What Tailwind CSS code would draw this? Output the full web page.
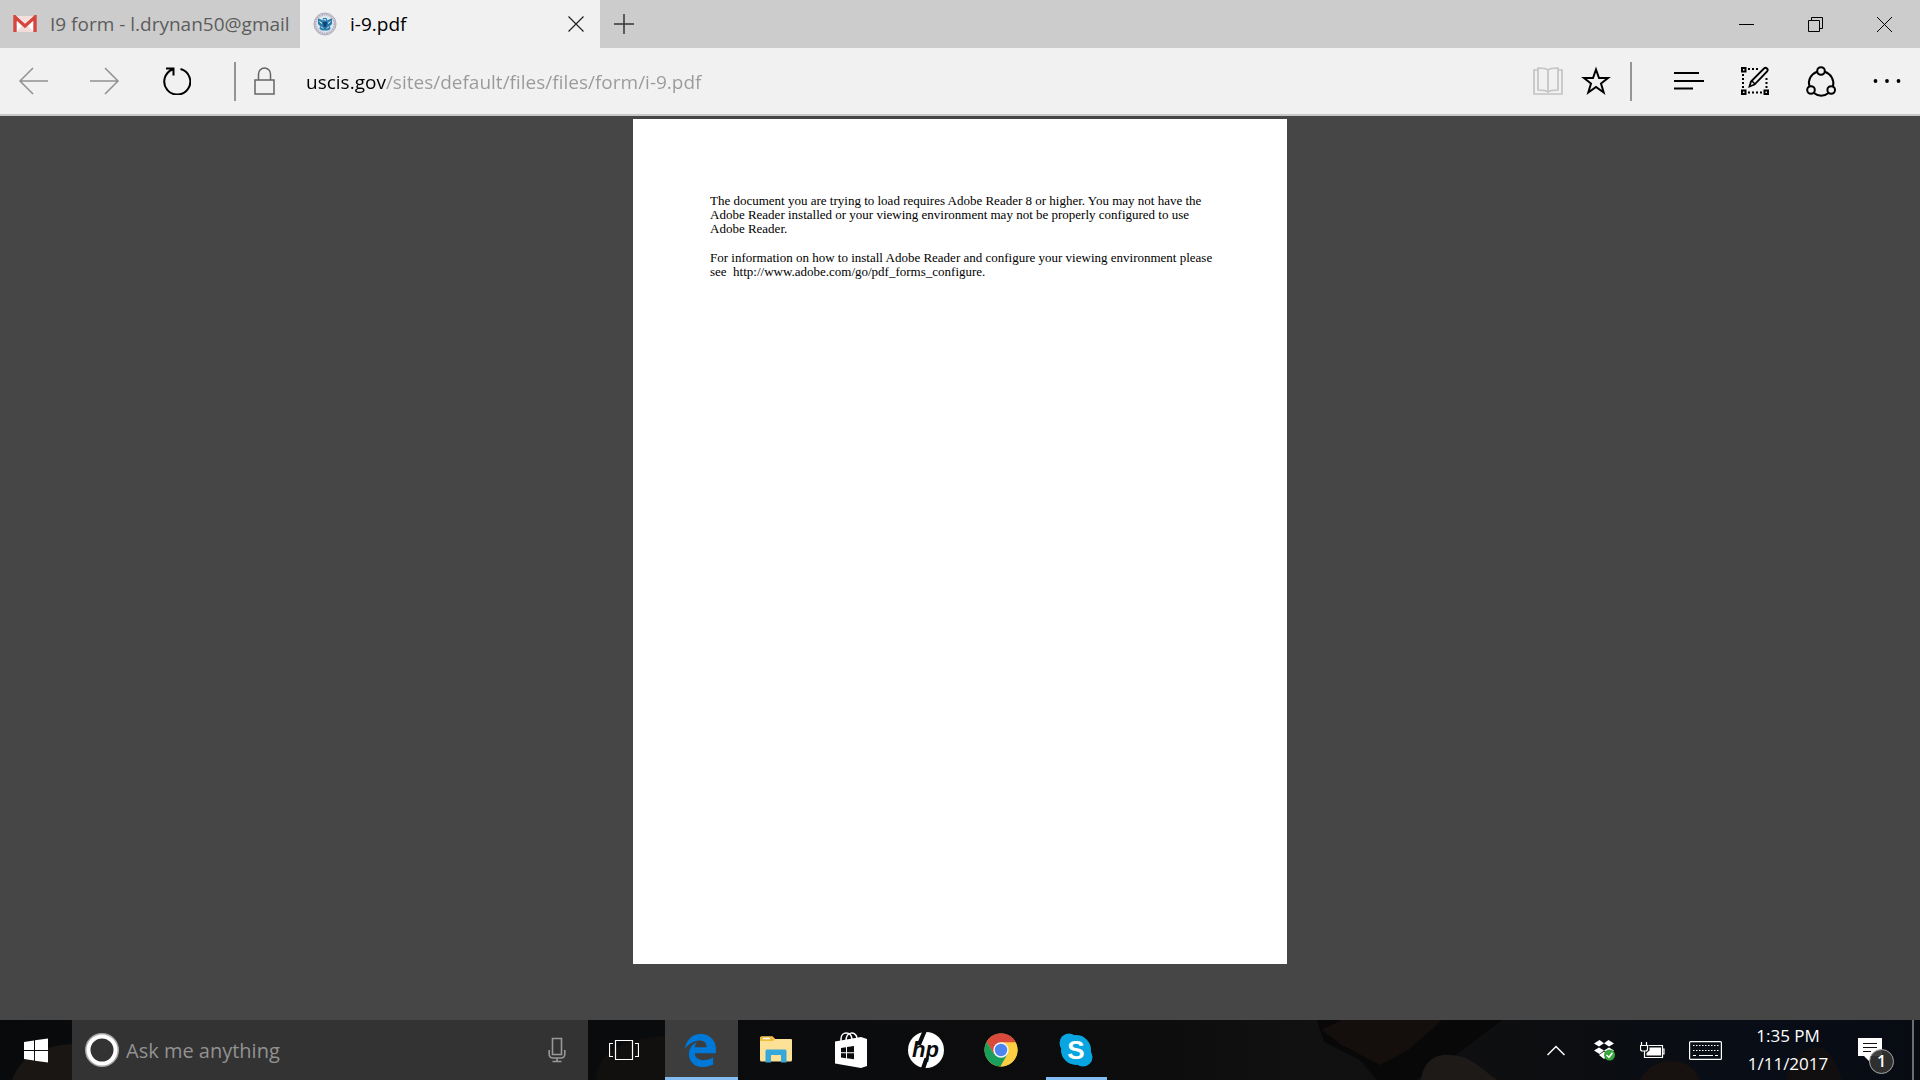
<!DOCTYPE html>
<html lang="en">
<head>
  <meta charset="UTF-8" />
  <meta name="viewport" content="width=device-width, initial-scale=1.0"/>
  <title>i-9.pdf</title>
  <script src="https://cdn.jsdelivr.net/npm/@tailwindcss/browser@4"></script>
</head>
<body class="min-h-screen flex flex-col bg-[#464646] font-['Open_Sans',sans-serif] text-black">

  <!-- Tab strip -->
  <header class="h-12 flex bg-[#cccccc]">
    <button class="w-75 h-12 pl-[13px] flex items-center gap-[13px] text-[19px] text-[#5c5c5c] whitespace-nowrap overflow-hidden">
      <svg class="shrink-0" width="24" height="18" viewBox="0 0 24 18">
        <rect x="1" y="1" width="22" height="16" fill="#fff"/>
        <path d="M3 17l7-7h4l7 7z" fill="#f3dcda"/>
        <path d="M2 17V2l10 9 10-9v15" fill="none" stroke="#d5463f" stroke-width="3.400"/>
        <path d="M4 1h16l-8 7z" fill="#f6dedc"/>
      </svg>
      <span>I9 form - l.drynan50@gmail</span>
    </button>
    <div class="w-75 h-12 pl-[13px] pr-4 flex items-center bg-[#f1f1f1] text-[19px]">
      <svg class="shrink-0 mr-[13px]" width="24" height="24" viewBox="0 0 24 24">
        <circle cx="12" cy="12" r="11" fill="#d9dbe2" stroke="#a7adba" stroke-width="1"/>
        <circle cx="12" cy="12" r="9.500" fill="none" stroke="#b5a5b8" stroke-width="1.500" stroke-dasharray="1.400 1"/>
        <circle cx="12" cy="12" r="7.800" fill="#dcebf3"/>
        <path d="M5 6.500c2 0 3 1 4.500 2L10 6h3.500l1 2.500C16 7.500 17 6.500 19 6.500V12l-2 2 .5 3-2.500 1.500H9L6.500 17 7 14l-2-2z" fill="#2a7dab"/>
        <path d="M10 10h4l-.5 4-1.500 1.500-1.500-1.500z" fill="#0d4474"/>
        <path d="M10.500 7.500l2.500 .5M6.500 9.500l2.500 2M17.500 9.500l-2.500 2M8 14.500l2 2M16 14.500l-2 2" stroke="#fff" fill="none"/>
      </svg>
      <button class="grow text-left">i-9.pdf</button>
      <button aria-label="Close tab">
        <svg width="16" height="16" viewBox="0 0 16 16" fill="none" stroke="#222" stroke-width="1.200"><path d="M.5 .5l15 15M15.500 .5l-15 15"/></svg>
      </button>
    </div>
    <button aria-label="New tab" class="w-12 flex items-center justify-center">
      <svg width="20" height="20" viewBox="0 0 20 20" fill="none" stroke="#333" stroke-width="1.500"><path d="M10 0v20M0 10h20"/></svg>
    </button>
    <div class="ml-auto mr-px flex">
      <button aria-label="Minimize" class="w-[69px] flex items-center justify-center">
        <svg width="15" height="15" viewBox="0 0 15 15" fill="none" stroke="#000"><path d="M0 7.500h15"/></svg>
      </button>
      <button aria-label="Restore" class="w-[69px] flex items-center justify-center">
        <svg width="15" height="15" viewBox="0 0 15 15" fill="none" stroke="#000"><path d="M.5 3.500h11v11H.5zM3.500 3.500v-3h11v11h-3"/></svg>
      </button>
      <button aria-label="Close" class="w-[69px] flex items-center justify-center">
        <svg width="15" height="15" viewBox="0 0 15 15" fill="none" stroke="#000"><path d="M0 0l15 15M15 0L0 15"/></svg>
      </button>
    </div>
  </header>

  <!-- Address bar -->
  <nav class="h-[68px] pl-px flex items-center bg-[#f1f1f1] border-b-2 border-[#c8c8c8]">
    <button aria-label="Back" class="w-16 flex justify-center">
      <svg width="30" height="28" viewBox="0 0 30 28" fill="none" stroke="#919191" stroke-width="1.500"><path d="M30 14H2M15 1L2 14l13 13"/></svg>
    </button>
    <button aria-label="Forward" class="w-20 flex justify-center">
      <svg width="30" height="28" viewBox="0 0 30 28" fill="none" stroke="#919191" stroke-width="1.500"><path d="M0 14h28M15 1l13 13-13 13"/></svg>
    </button>
    <button aria-label="Refresh" class="w-16 flex justify-center">
      <svg width="28" height="28" viewBox="0 0 28 28" fill="none" stroke="#000" stroke-width="2"><path d="M17.500 2A13 13 0 1 1 9.500 2.500M3 1.500h7.500V8.500"/></svg>
    </button>
    <div class="w-0.5 h-[39px] ml-[25px] bg-[#959595]"></div>
    <svg class="ml-[18px] shrink-0" width="21" height="28" viewBox="0 0 21 28" fill="none" stroke="#666" stroke-width="1.500"><path d="M1 13h19v14H1zM4.500 13V7a6 6 0 0 1 12 0v6"/></svg>
    <input aria-label="Address" value="uscis.gov/sites/default/files/files/form/i-9.pdf" class="grow ml-[31px] h-10 pt-0.5 text-[19px] outline-none text-transparent bg-clip-text bg-[linear-gradient(90deg,#000_80px,#999_80px)]" />
    <button aria-label="Reading view" class="w-12 flex justify-center">
      <svg width="30" height="28" viewBox="0 0 30 28" fill="none" stroke="#c4c4c4" stroke-width="1.700"><path d="M5 3H1v24h28V3h-4M15 3c-2-2-6-2-10-2v22c4 0 8 0 10 2 2-2 6-2 10-2V1c-4 0-8 0-10 2zM15 3v22"/></svg>
    </button>
    <button aria-label="Add to favorites" class="w-12 flex justify-center">
      <svg width="30" height="30" viewBox="0 0 30 30" fill="none" stroke="#000" stroke-width="2"><path d="M15 3.500l3 8.500h9l-7 5.500 2.700 9L15 21l-7.700 5.500 2.700-9L3 12h9z"/></svg>
    </button>
    <div class="w-0.5 h-[39px] ml-2.5 mr-6 bg-[#959595]"></div>
    <button aria-label="Hub" class="w-[66px] flex justify-center">
      <svg width="30" height="20" viewBox="0 0 30 20" fill="none" stroke="#000" stroke-width="2"><path d="M0 2h25M0 10h30M0 17.500h19"/></svg>
    </button>
    <button aria-label="Make a Web Note" class="w-[66px] flex justify-center">
      <svg width="30" height="30" viewBox="0 0 30 30" fill="none" stroke="#000" stroke-width="2">
        <path d="M2 2h3.500v3.500H2zM2 24.500h3.500V28H2zM24.500 24.500H28V28h-3.500z"/>
        <path d="M8 3h11M8 26.500h15M3 8v15M26.500 12v11" stroke-dasharray="2 2"/>
        <path d="M9.500 20.500l1.500-5L24 2.500a2 2 0 0 1 3 3L14.500 18.500z" stroke-width="1.800"/>
        <path d="M12 15l3 3" stroke-width="1.500"/>
      </svg>
    </button>
    <button aria-label="Share" class="w-[66px] flex justify-center">
      <svg width="30" height="31" viewBox="0 0 30 31" fill="none" stroke="#000" stroke-width="2">
        <circle cx="15" cy="5" r="3.800"/><circle cx="5" cy="24" r="3.800"/><circle cx="25.200" cy="24" r="3.800"/>
        <path d="M11.200 5.800C5 8 1.500 14 3.500 20.200M18.800 5.800C25 8 28.500 14 27 20.200M8 27c4 3.500 10.500 3.500 14.500 0"/>
      </svg>
    </button>
    <button aria-label="More actions" class="w-[66px] flex justify-center">
      <svg width="28" height="4" viewBox="0 0 28 4"><circle cx="2.500" cy="2" r="1.900"/><circle cx="14" cy="2" r="1.900"/><circle cx="25.500" cy="2" r="1.900"/></svg>
    </button>
  </nav>

  <!-- Document -->
  <main class="grow pt-[3px] pb-14">
    <article class="w-[654px] aspect-[654/845] mx-auto pt-[75px] pl-[77px] pr-14 bg-white font-['Liberation_Serif',serif] text-[13px] leading-[14px] whitespace-nowrap">
      <p>The document you are trying to load requires Adobe Reader 8 or higher. You may not have the<br>
        Adobe Reader installed or your viewing environment may not be properly configured to use<br>
        Adobe Reader.</p>
      <p class="mt-[15px]">For information on how to install Adobe Reader and configure your viewing environment please<br>
        see &nbsp;http://www.adobe.com/go/pdf_forms_configure.</p>
    </article>
  </main>

  <!-- Taskbar -->
  <footer class="relative h-15 flex bg-[#0b0c0e] text-white">
    <!-- dimmed wallpaper behind the bar -->
    <svg class="absolute inset-0 w-full h-full" viewBox="0 0 1920 60" preserveAspectRatio="none">
      <defs>
        <linearGradient id="wall">
          <stop offset="0" stop-color="#090a0b"/><stop offset=".35" stop-color="#0a0b0d"/><stop offset=".6" stop-color="#0d0d0e"/>
          <stop offset=".68" stop-color="#121112"/><stop offset=".8" stop-color="#0d0e10"/><stop offset=".92" stop-color="#080d17"/><stop offset="1" stop-color="#080b12"/>
        </linearGradient>
      </defs>
      <path fill="url(#wall)" d="M0 0h1920v60H0z"/>
      <path fill="#191613" d="M12 60c8-22 26-34 60-36v36z"/>
      <path fill="#12100e" d="M596 60c2-26 20-40 69-44v44z"/>
      <path fill="#090808" d="M1317 0h185l-42 32-45 28h-38l-17-20-36-18z"/>
      <path fill="#140f0d" d="M1322 10l20-10h100l-34 30-28 15-38-20z"/>
      <path fill="#1d1a18" d="M1421 60c2-18 14-26 26-25 22-1 32 12 50 25z"/>
      <path fill="#17110f" d="M1640 60c6-12 18-19 30-19 16 0 24 6 30 19z"/>
      <path fill="#120f10" d="M1786 60c4-18 12-31 32-33 12 2 20 20 24 33z"/>
    </svg>

    <div class="relative grow flex">
      <button aria-label="Start" class="w-18 flex items-center justify-center">
        <svg width="24" height="25" viewBox="0 0 24 25" fill="#fff"><path d="M0 4l10-1.500V12H0zM11 2.300L24 .5V12H11zM0 13h10v9.500L0 21zM11 13h13v11.500l-13-1.800z"/></svg>
      </button>
      <label class="w-129 pl-3 pr-[22px] flex items-center bg-[#333333]">
        <svg class="shrink-0" width="36" height="36" viewBox="0 0 36 36" fill="none"><circle cx="18" cy="18" r="16" stroke="#aaa" stroke-width="2"/><circle cx="18" cy="18" r="13.500" stroke="#fff" stroke-width="4"/></svg>
        <input aria-label="Search" placeholder="Ask me anything" class="grow ml-1.5 pt-0.5 text-[20px] outline-none placeholder:text-[#929292]" />
        <svg width="18" height="26" viewBox="0 0 18 26" fill="none" stroke="#999" stroke-width="1.600"><path d="M4.500 1.500h9v16h-9zM1.200 13v4c0 3 1.500 4 4 4h7.600c2.500 0 4-1 4-4v-4M9 21v3.500M4.500 24.500h9"/></svg>
      </label>
      <button aria-label="Task View" class="w-[77px] pr-1.5 flex items-center justify-center">
        <svg width="30" height="20" viewBox="0 0 30 20" fill="none" stroke="#fff" stroke-width="1.200"><path d="M6.500 .5h17v19h-17zM4 3.500H.5v13H4M26 3.500h3.500v13H26"/></svg>
      </button>
      <div class="flex gap-0.5">
        <button aria-label="Microsoft Edge" class="w-[73px] pt-[3px] pr-0.5 flex items-center justify-center bg-[#3d3d3e] border-b-3 border-[#83bbf3]">
          <svg width="31" height="33" viewBox="25 8 462 496" preserveAspectRatio="none" fill="#0078d7"><path d="M26 228C40 113 119 8 259 8c85 0 158 40 199 113 21 38 28 79 28 123v52H172c1 128 191 124 272 67v105c-47 29-156 53-240 22-70-27-120-101-121-172-1-92 46-153 121-188-16 20-28 41-34 79h176c10-105-100-105-100-105-103 3-178 63-220 124z"/></svg>
        </button>
        <button aria-label="File Explorer" class="w-[73px] pr-0.5 flex items-center justify-center">
          <svg width="32" height="28" viewBox="0 0 32 28">
            <path d="M0 2q0-1.500 1.500-1.500h11L15 3h16q1 0 1 1v20q0 1.500-1.500 1.500h-29Q0 25.500 0 24z" fill="#fce196"/>
            <path d="M0 5V2Q0 .5 1.500 .5h11L15 3l-2 2z" fill="#f1bd3a"/><path d="M3 2.500h7" stroke="#fff" stroke-width="1.500"/>
            <path d="M5.500 26.500V15q0-1.500 1.500-1.500h18q1.500 0 1.500 1.500v11.500h-5.500V19H11v7.500z" fill="#35a8dc"/>
          </svg>
        </button>
        <button aria-label="Store" class="w-[73px] pr-0.5 flex items-center justify-center">
          <svg width="32" height="36" viewBox="0 0 32 36">
            <path d="M6 10V7c0-8 10-8 11 0v3M11 9c0-10 10-10 11-3v2" fill="none" stroke="#fff" stroke-width="1.500"/>
            <path d="M0 9.500l26-4.500v31L0 31.500zM26 5l6 2v27l-6 2z" fill="#fff"/>
            <path d="M6 16l5-.8v5H6zM12 15l7-1v6.200h-7zM6 21.200h5v5l-5-.7zM12 21.200h7v6l-7-.9z" fill="#0b0c0e"/>
          </svg>
        </button>
        <button aria-label="HP" class="w-[73px] pr-0.5 flex items-center justify-center">
          <svg width="36" height="36" viewBox="0 0 36 36">
            <circle cx="18" cy="18" r="18" fill="#fff"/>
            <path d="M14 0h4.500l-5.500 13H8.500zM16.500 26h4.300L17.500 36H13z" fill="#0b0c0e"/>
            <text x="4" y="25" font-family="Liberation Sans" font-weight="bold" font-style="italic" font-size="22" fill="#0b0c0e">hp</text>
          </svg>
        </button>
        <button aria-label="Google Chrome" class="w-[73px] pr-0.5 flex items-center justify-center">
          <svg width="34" height="34" viewBox="0 0 34 34">
            <circle cx="17" cy="17" r="16.500" fill="#fcce41"/>
            <path d="M17 .5A16.500 16.500 0 0 0 2.700 8.700L10 21l7-11.500h14.800A16.500 16.500 0 0 0 17 .5z" fill="#d94a3d"/>
            <path d="M2.700 8.700A16.500 16.500 0 0 0 16.500 33.500L24 21l-14 0z" fill="#1a9e5b"/>
            <path d="M17 9.500h14.800a16.500 16.500 0 0 1-15.300 24L23.500 21z" fill="#fcce41"/>
            <circle cx="17" cy="17" r="7.700" fill="#f5f5f5"/><circle cx="17" cy="17" r="6.200" fill="#4c85ee"/>
          </svg>
        </button>
        <button aria-label="Skype" class="w-[73px] px-1.5">
          <span class="h-15 pt-[3px] pr-0.5 flex items-center justify-center border-b-3 border-[#83bbf3]">
            <svg class="overflow-visible" width="34" height="34" viewBox="0 0 34 34">
              <g fill="#09a5e0"><circle cx="17" cy="17" r="15"/><circle cx="10" cy="10" r="9.500"/><circle cx="24" cy="24" r="9.500"/></g>
              <text x="17" y="26" text-anchor="middle" font-family="Liberation Sans" font-weight="bold" font-size="26" fill="#fff">S</text>
            </svg>
          </span>
        </button>
      </div>
    </div>

    <!-- Notification area -->
    <div class="relative flex">
      <button aria-label="Show hidden icons" class="w-12 flex items-center justify-center">
        <svg width="18" height="11" viewBox="0 0 18 11" fill="none" stroke="#fff" stroke-width="1.500"><path d="M.5 10L9 1.500 17.500 10"/></svg>
      </button>
      <button aria-label="Dropbox" class="w-[49px] flex items-center justify-center">
        <svg width="22" height="21" viewBox="0 0 22 21">
          <path d="M5.500 0L10 3.200 5 6.500 0 3.500zM14.500 0L20 3.500 15 6.500 10 3.200zM5 7.500L10 10.500 5.500 14 0 10.500zM15 7.500L20 10.500 14.500 14 10 10.500zM5 15l5-3.500L15 15l-5 4z" fill="#fff"/>
          <circle cx="15.500" cy="15" r="5.500" fill="#38a63f"/><path d="M12.500 15l2.500 2.300 3.500-4.500" fill="none" stroke="#fff" stroke-width="1.500"/>
        </svg>
      </button>
      <button aria-label="Battery" class="w-[46px] flex items-center justify-center">
        <svg width="25" height="17" viewBox="0 0 25 17" fill="none" stroke="#fff" stroke-width="1.200">
          <path d="M8.500 3.500h14v12H4.500V9M22.500 7H24v5h-1.500M1.500 0v3.500M6.500 0v3.500"/><path d="M.5 3.500h7V7q0 2-2 2h-3q-2 0-2-2z" fill="#0b0c0e"/><path d="M9.500 5.500H21v8H6.500V11l3-2.500z" fill="#fff" stroke="none"/>
        </svg>
      </button>
      <button aria-label="Touch keyboard" class="w-[61px] flex items-center justify-center">
        <svg width="33" height="19" viewBox="0 0 33 19" fill="none" stroke="#fff" stroke-width="1.200">
          <rect x=".6" y=".6" width="31.800" height="17.800" rx="1"/><path d="M4 4.500h26M4 9.500h26" stroke-dasharray="1.500 1.500"/><path d="M4 14.500h3M10 14.500h14M26 14.500h3"/>
        </svg>
      </button>
      <button class="w-26 flex flex-col items-center justify-center text-[17px] leading-7">
        <span>1:35 PM</span>
        <span>1/11/2017</span>
      </button>
      <button aria-label="Action center, 1 new notification" class="w-18 pt-3 flex items-center justify-center">
        <svg width="36" height="37" viewBox="0 0 36 37">
          <path d="M0 0h24v18H12v6l-6-6H0z" fill="#fff"/><path d="M5 5.500h14M5 9.500h14M5 13.500h8" stroke="#111"/>
          <circle cx="23.500" cy="23.500" r="12" fill="#333" fill-opacity=".93" stroke="#a5a5a5"/>
          <text x="23.500" y="29" text-anchor="middle" font-family="Open Sans" font-weight="600" font-size="16" fill="#fff">1</text>
        </svg>
      </button>
      <button aria-label="Show desktop" class="w-2 border-l-2 border-[#6a6d70]"></button>
    </div>
  </footer>

</body>
</html>
